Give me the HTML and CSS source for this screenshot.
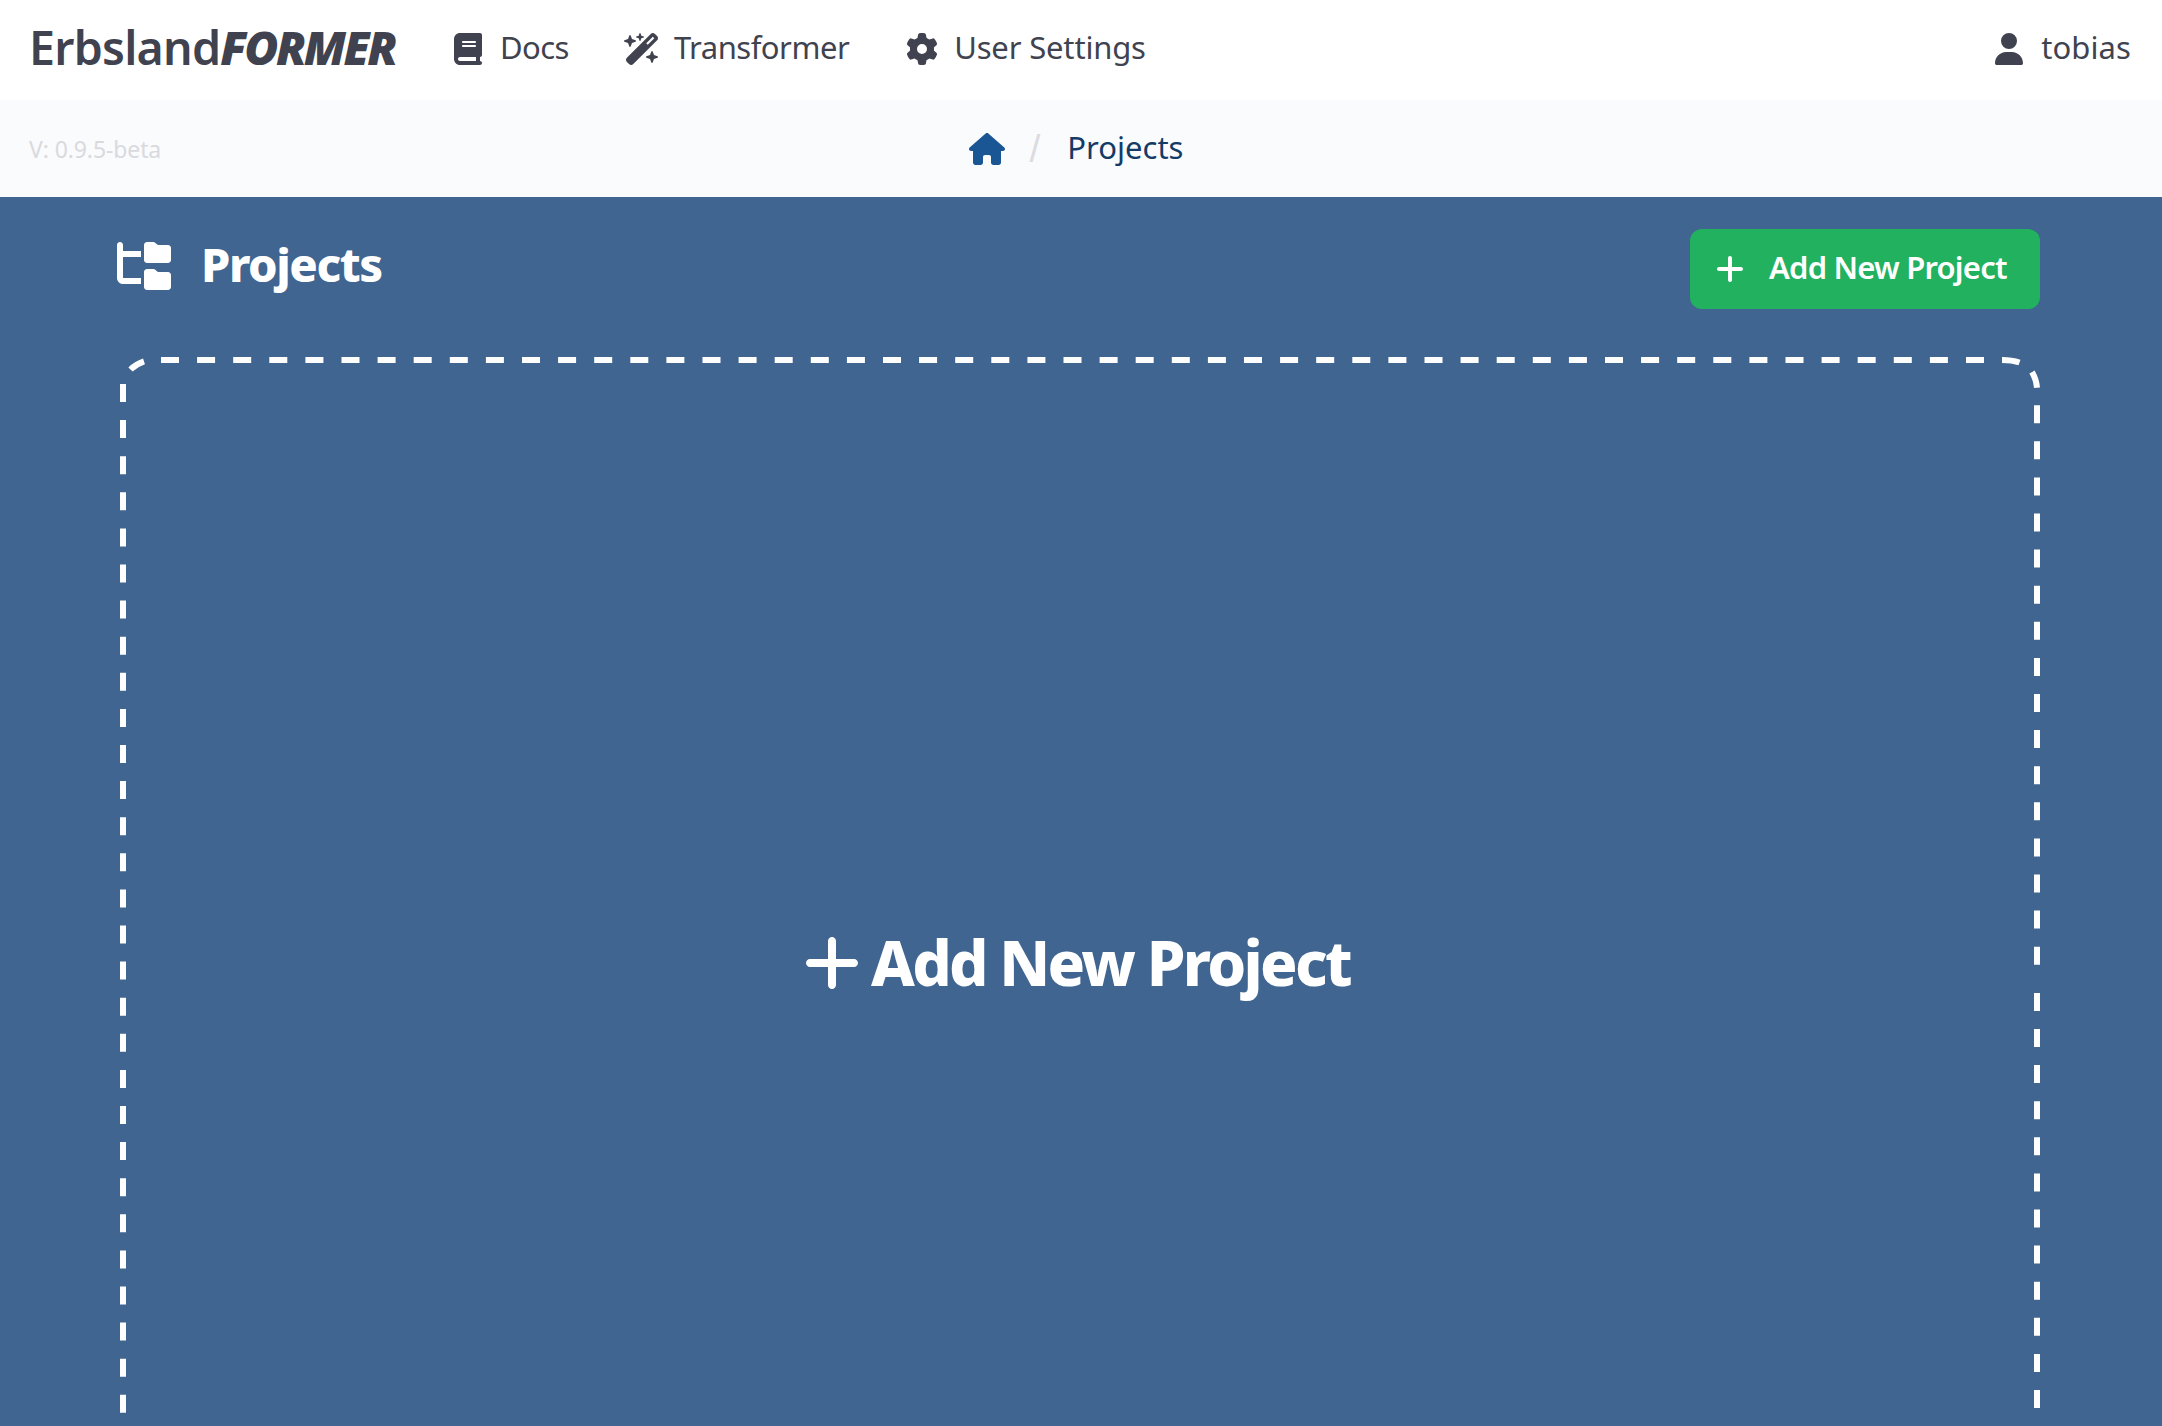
FILE: index.html
```
<!DOCTYPE html>
<html lang="en">
<head>
<meta charset="utf-8">
<title>ErbslandFORMER – Projects</title>
<link rel="stylesheet" href="styles.css">
</head>
<body>
<header class="navbar">
  <a class="brand"><span class="brand-name">Erbsland</span><span class="brand-accent">FORMER</span></a>
  <nav class="menu">
    <a class="item"><span class="slot"><svg class="icon" viewBox="0 0 448 512"><path d="M96 0C43 0 0 43 0 96V416c0 53 43 96 96 96H384h32c17.700 0 32-14.300 32-32s-14.300-32-32-32V384c17.700 0 32-14.300 32-32V32c0-17.700-14.300-32-32-32H384 96zm0 384H352v64H96c-17.700 0-32-14.300-32-32s14.300-32 32-32zm32-240c0-8.800 7.200-16 16-16H336c8.800 0 16 7.200 16 16s-7.200 16-16 16H144c-8.800 0-16-7.200-16-16zm16 48H336c8.800 0 16 7.200 16 16s-7.200 16-16 16H144c-8.800 0-16-7.200-16-16s7.200-16 16-16z"/></svg></span><span class="label docs">Docs</span></a>
    <a class="item"><span class="slot"><svg class="icon" viewBox="0 0 576 512"><path d="M234.700 42.700L197 56.800c-3 1.100-5 4-5 7.200s2 6.100 5 7.200l37.700 14.100L248.800 123c1.100 3 4 5 7.200 5s6.100-2 7.200-5l14.100-37.700L315 71.200c3-1.100 5-4 5-7.200s-2-6.100-5-7.200L277.300 42.700 263.200 5c-1.100-3-4-5-7.200-5s-6.100 2-7.200 5L234.700 42.700zM46.100 395.400c-18.700 18.700-18.700 49.100 0 67.900l34.600 34.600c18.700 18.700 49.100 18.700 67.900 0L529.900 116.500c18.700-18.700 18.700-49.100 0-67.900L495.300 14.100c-18.700-18.700-49.100-18.700-67.900 0L46.100 395.400zM484.600 82.600l-105 105-23.300-23.300 105-105 23.300 23.300zM7.500 117.200C3 118.900 0 123.200 0 128s3 9.100 7.500 10.800L64 160l21.200 56.500c1.700 4.500 6 7.500 10.800 7.500s9.100-3 10.800-7.500L128 160l56.500-21.200c4.500-1.700 7.500-6 7.500-10.800s-3-9.100-7.500-10.800L128 96 106.800 39.500C105.100 35 100.800 32 96 32s-9.100 3-10.800 7.500L64 96 7.500 117.200zm352 256c-4.500 1.700-7.500 6-7.500 10.800s3 9.100 7.500 10.800L416 416l21.200 56.500c1.700 4.500 6 7.500 10.800 7.500s9.100-3 10.800-7.500L480 416l56.500-21.200c4.500-1.700 7.500-6 7.500-10.800s-3-9.100-7.500-10.800L480 352l-21.200-56.500c-1.700-4.500-6-7.500-10.800-7.500s-9.100 3-10.800 7.500L416 352l-56.500 21.200z"/></svg></span><span class="label transformer">Transformer</span></a>
    <a class="item"><span class="slot"><svg class="icon" viewBox="0 0 512 512"><path d="M495.900 166.600c3.200 8.700 .5 18.400-6.400 24.600l-43.300 39.400c1.100 8.300 1.700 16.800 1.700 25.400s-.6 17.100-1.700 25.400l43.300 39.400c6.900 6.200 9.600 15.900 6.400 24.600c-4.400 11.900-9.700 23.300-15.800 34.300l-4.700 8.100c-6.600 11-14 21.400-22.100 31.200c-5.900 7.200-15.700 9.600-24.500 6.800l-55.700-17.700c-13.400 10.300-28.200 18.900-44 25.400l-12.500 57.100c-2 9.100-9 16.300-18.200 17.800c-13.800 2.300-28 3.500-42.500 3.500s-28.700-1.200-42.500-3.500c-9.200-1.500-16.200-8.700-18.200-17.800l-12.500-57.100c-15.800-6.500-30.600-15.100-44-25.400L83.100 425.900c-8.800 2.800-18.600 .3-24.500-6.800c-8.100-9.800-15.500-20.200-22.100-31.200l-4.700-8.100c-6.100-11-11.400-22.400-15.800-34.300c-3.200-8.700-.5-18.400 6.400-24.600l43.300-39.400C64.600 273.100 64 264.600 64 256s.6-17.100 1.700-25.400L22.400 191.200c-6.900-6.200-9.600-15.900-6.400-24.600c4.400-11.900 9.700-23.300 15.800-34.300l4.700-8.100c6.600-11 14-21.400 22.100-31.200c5.900-7.200 15.700-9.600 24.500-6.800l55.700 17.700c13.400-10.300 28.200-18.900 44-25.400l12.500-57.100c2-9.100 9-16.300 18.200-17.800C227.300 1.200 241.500 0 256 0s28.700 1.200 42.500 3.500c9.200 1.500 16.200 8.700 18.200 17.800l12.500 57.100c15.800 6.500 30.600 15.100 44 25.400l55.700-17.700c8.800-2.800 18.600-.3 24.500 6.800c8.100 9.800 15.500 20.200 22.100 31.200l4.700 8.100c6.100 11 11.400 22.400 15.800 34.300zM256 336a80 80 0 1 0 0-160 80 80 0 1 0 0 160z"/></svg></span><span class="label settings">User Settings</span></a>
  </nav>
  <a class="item account"><span class="slot"><svg class="icon" viewBox="0 0 448 512"><path d="M224 256A128 128 0 1 0 224 0a128 128 0 1 0 0 256zm-45.700 48C79.800 304 0 383.800 0 482.300C0 498.700 13.300 512 29.700 512H418.300c16.400 0 29.700-13.300 29.700-29.700C448 383.800 368.200 304 269.700 304H178.300z"/></svg></span><span class="label">tobias</span></a>
</header>
<div class="subbar">
  <span class="version">V: 0.9.5-beta</span>
  <nav class="crumbs">
    <a class="home"><svg class="icon" viewBox="0 0 576 512"><path d="M575.800 255.500c0 18-15 32.100-32 32.100h-32l.7 160.200c0 2.700-.2 5.400-.5 8.100V472c0 22.100-17.900 40-40 40H456c-1.100 0-2.200 0-3.300-.1c-1.400 .1-2.800 .1-4.200 .1H416 392c-22.100 0-40-17.900-40-40V448 384c0-17.700-14.300-32-32-32H256c-17.700 0-32 14.300-32 32v64 24c0 22.100-17.900 40-40 40H160 128.100c-1.500 0-3-.1-4.500-.2c-1.200 .1-2.400 .2-3.600 .2H104c-22.100 0-40-17.900-40-40V360c0-.9 0-1.900 .1-2.800V287.600H32c-18 0-32-14-32-32.100c0-9 3-17 10-24L266.400 8c7-7 15-8 22-8s15 2 21 7L564.800 231.500c8 7 12 15 11 24z"/></svg></a>
    <span class="divider">/</span>
    <a class="current">Projects</a>
  </nav>
</div>
<main class="page">
  <div class="page-head">
    <h1 class="title"><svg class="icon" viewBox="0 0 576 512"><path d="M64 32C64 14.300 49.700 0 32 0S0 14.300 0 32v96V384c0 35.300 28.700 64 64 64H256V384H64V160H256V96H64V32zM288 192c0 17.700 14.300 32 32 32H544c17.700 0 32-14.300 32-32V64c0-17.700-14.300-32-32-32H445.300c-8.500 0-16.600-3.400-22.600-9.400L409.400 9.400c-6-6-14.100-9.400-22.600-9.400H320c-17.700 0-32 14.300-32 32V192zm0 288c0 17.700 14.300 32 32 32H544c17.700 0 32-14.300 32-32V352c0-17.700-14.300-32-32-32H445.300c-8.500 0-16.600-3.400-22.600-9.400l-13.300-13.300c-6-6-14.100-9.400-22.600-9.400H320c-17.700 0-32 14.300-32 32V480z"/></svg><span class="title-text">Projects</span></h1>
    <button class="button"><svg class="icon" viewBox="0 0 448 512"><path d="M256 80c0-17.700-14.300-32-32-32s-32 14.300-32 32V224H48c-17.700 0-32 14.300-32 32s14.300 32 32 32H192V432c0 17.700 14.300 32 32 32s32-14.300 32-32V288H400c17.700 0 32-14.300 32-32s-14.300-32-32-32H256V80z"/></svg><span class="button-text">Add New Project</span></button>
  </div>
  <a class="dropzone">
    <svg class="outline" viewBox="0 0 1920 1069">
      <path stroke-dasharray="18 18.1" d="M1917 607.700V40M41 3H1880M3 27V1069M1917 635.900V1068"/>
      <path d="M10.500 12.500Q16 7 24 4.300M1882 3Q1892 3 1899.500 5.500M1912 15Q1916.500 23 1917 30.700"/>
    </svg>
    <svg class="icon" viewBox="0 0 448 512"><path d="M256 80c0-17.700-14.300-32-32-32s-32 14.300-32 32V224H48c-17.700 0-32 14.300-32 32s14.300 32 32 32H192V432c0 17.700 14.300 32 32 32s32-14.300 32-32V288H400c17.700 0 32-14.300 32-32s-14.300-32-32-32H256V80z"/></svg>
    <span class="dropzone-text">Add New Project</span>
  </a>
</main>
</body>
</html>
```
FILE: styles.css
```
* { box-sizing: border-box; }

body {
  margin: 0;
  height: 1426px;
  overflow: hidden;
  display: flex;
  flex-direction: column;
  background: #3f6590;
  color: #40434f;
  font: 31px/1.4 "Noto Sans", sans-serif;
}

.icon {
  display: block;
  flex: none;
  height: 32px;
  fill: currentColor;
}

.navbar {
  flex: none;
  display: flex;
  align-items: center;
  height: 100px;
  padding: 0 31px 2px 29px;
  background: #fff;
}

.brand {
  display: flex;
  width: 366px;
  padding-bottom: 2px;
  font-size: 46.500px;
}

.brand-name {
  font-weight: 600;
  letter-spacing: -0.75px;
}

.brand-accent {
  font-weight: 900;
  font-style: italic;
  letter-spacing: -2.5px;
}

.menu {
  display: flex;
  gap: 55px;
  margin-left: 55px;
}

.item {
  display: flex;
  align-items: center;
  gap: 14px;
}

.slot {
  display: flex;
  justify-content: center;
  width: 36px;
}

.label { padding-bottom: 2px; }
.docs { letter-spacing: -0.55px; }
.transformer { letter-spacing: -0.5px; }
.settings { letter-spacing: -0.17px; }

.account {
  margin-left: auto;
  letter-spacing: 0.1px;
}

.subbar {
  flex: none;
  display: grid;
  grid-template-columns: 1fr auto 1fr;
  align-items: center;
  height: 97px;
  padding: 1px 29px 0;
  background: #fafbfd;
}

.version {
  font-size: 23px;
  letter-spacing: -0.1px;
  color: #d9dadd;
}

.crumbs {
  grid-column: 2;
  display: flex;
  align-items: center;
  margin-right: 10px;
}

.home { color: #1a5694; }

.divider {
  margin: 0 27px 0 25px;
  padding-bottom: 1px;
  font: 39px/1 "Liberation Sans", sans-serif;
  color: #dcdcdf;
}

.current {
  padding-bottom: 2px;
  color: #143a66;
}

.page {
  flex: 1;
  min-height: 0;
  padding: 32px 122px 0 120px;
  color: #fff;
}

.page-head {
  display: flex;
  justify-content: space-between;
  height: 80px;
  margin-bottom: 48px;
}

.title {
  display: flex;
  align-items: center;
  gap: 30px;
  height: 74px;
  margin: 0 0 0 -3px;
  font-size: 47px;
  font-weight: 800;
  line-height: 1;
}

.title .icon { height: 48px; }

.title-text {
  padding-bottom: 3px;
  letter-spacing: -1.45px;
}

.button {
  display: flex;
  align-items: center;
  gap: 25px;
  width: 350px;
  height: 80px;
  padding: 0 0 0 26px;
  border: 0;
  border-radius: 12px;
  background: #22b15f;
  color: inherit;
  font: 600 31px/1 "Noto Sans", sans-serif;
}

.button-text {
  padding-bottom: 3px;
  letter-spacing: -0.8px;
  white-space: nowrap;
}

.dropzone {
  position: relative;
  display: flex;
  align-items: center;
  justify-content: center;
  gap: 11px;
  height: 1069px;
  padding: 143px 6px 0 0;
}

.dropzone .icon { height: 64px; }

.dropzone-text {
  padding-bottom: 3px;
  font-size: 62px;
  font-weight: 800;
  line-height: 1;
  letter-spacing: -2.7px;
  white-space: nowrap;
}

.outline {
  position: absolute;
  inset: 0;
  width: 1920px;
  height: 1069px;
  fill: none;
  stroke: #fff;
  stroke-width: 6;
}
```
